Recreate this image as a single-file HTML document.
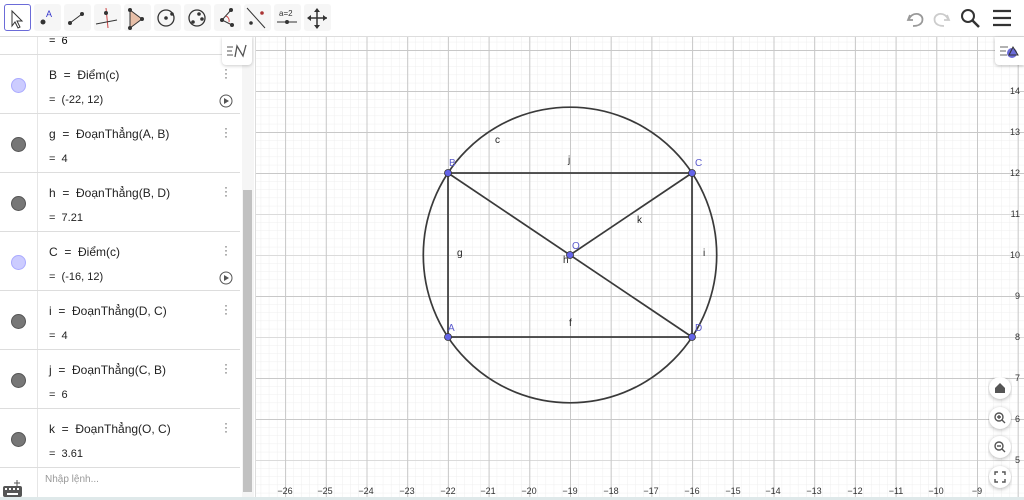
<!DOCTYPE html>
<html><head><meta charset="utf-8"><style>
body{margin:0;width:1024px;height:500px;overflow:hidden;font-family:"Liberation Sans",sans-serif;background:#fff;position:relative}
.tb{position:absolute;left:0;top:0;width:1024px;height:36px;background:#fff;border-bottom:1px solid #ddd}
.tbtn{position:absolute;top:4px;width:27px;height:27px;border-radius:3px;background:#f6f6f6}
.alg{position:absolute;left:0;top:37px;width:255px;height:463px;background:#fff;border-right:1px solid #ddd;overflow:hidden}
.row{position:absolute;left:0;width:240px;height:58px;border-bottom:1px solid #ddd}
.row .c{position:absolute;left:11px;top:23px;width:13px;height:13px;border-radius:50%;background:#777;border:1px solid #555}
.row .c.b{background:#ccccff;border-color:#aaf}
.row .l1{position:absolute;left:49px;top:13px;font-size:12px;color:#222}
.row .l2{position:absolute;left:49px;top:39px;font-size:11px;color:#222}
.row .dots{position:absolute;left:224px;top:12px;width:3px;font-size:12px;color:#555;line-height:4px}
.vl{position:absolute;left:37px;top:0;width:1px;height:463px;background:#e6e6e6}
</style></head><body>
<div class="tb">
<div class="tbtn" style="left:4px;border:1px solid #6b6bd8;width:25px;height:25px;background:#fff"></div>
<div class="tbtn" style="left:34px"></div><div class="tbtn" style="left:64px"></div><div class="tbtn" style="left:94px"></div><div class="tbtn" style="left:124px"></div><div class="tbtn" style="left:154px"></div><div class="tbtn" style="left:184px"></div><div class="tbtn" style="left:214px"></div><div class="tbtn" style="left:244px"></div><div class="tbtn" style="left:274px"></div><div class="tbtn" style="left:304px"></div>
<svg width="1024" height="36" style="position:absolute;left:0;top:0">
<path d="M12 11 L12 26 L15 22 L18 28 L20 27 L17 21 L22 21 Z" fill="#fff" stroke="#333" stroke-width="1"/>
<circle cx="43" cy="22" r="2.5" fill="#333"/><text x="46" y="17" font-size="9" fill="#3333cc">A</text>
<line x1="70" y1="23" x2="82" y2="14" stroke="#333"/><circle cx="70" cy="23" r="2" fill="#333"/><circle cx="82" cy="14" r="2" fill="#333"/>
<line x1="106" y1="8" x2="108" y2="28" stroke="#c44"/><line x1="96" y1="24" x2="117" y2="20" stroke="#333"/><circle cx="106" cy="13" r="2" fill="#333"/>
<path d="M130 10 L130 28 L142 19 Z" fill="#e7bfa8" stroke="#333"/><circle cx="130" cy="10" r="2" fill="#333"/><circle cx="130" cy="28" r="2" fill="#333"/><circle cx="142" cy="19" r="2" fill="#333"/>
<circle cx="166" cy="18" r="8" fill="none" stroke="#333" stroke-width="1.3"/><circle cx="166" cy="18" r="1.8" fill="#333"/><circle cx="172" cy="14" r="1.8" fill="#333"/>
<circle cx="197" cy="18" r="8" fill="none" stroke="#333" stroke-width="1.3"/><circle cx="193" cy="22" r="1.8" fill="#333"/><circle cx="199" cy="14" r="1.8" fill="#333"/><circle cx="202" cy="19" r="1.8" fill="#333"/>
<path d="M231 10 L222 20 L232 25" fill="none" stroke="#333"/><path d="M226 16 a5 5 0 0 1 3 6" fill="none" stroke="#c44"/><circle cx="222" cy="20" r="2" fill="#333"/><circle cx="231" cy="10" r="2" fill="#333"/><circle cx="232" cy="25" r="2" fill="#333"/>
<line x1="247" y1="8" x2="265" y2="28" stroke="#333"/><circle cx="262" cy="13" r="1.8" fill="#a33"/><circle cx="251" cy="23" r="1.8" fill="#333"/>
<text x="279" y="16" font-size="8" fill="#333">a=2</text><line x1="277" y1="22" x2="297" y2="22" stroke="#333"/><circle cx="287" cy="22" r="2" fill="#333"/>
<path d="M317 9 L317 28 M308 18 L327 18" stroke="#333" stroke-width="1.5"/><path d="M314 12 L317 8 L320 12Z M314 25 L317 29 L320 25Z M311 15 L307 18 L311 21Z M323 15 L327 18 L323 21Z" fill="#333"/>
<path d="M910 15 L908 20 L913 20 M909 19 Q912 13 918 14 Q924 16 922 22 Q920 26 913 26" fill="none" stroke="#999" stroke-width="1.8"/>
<path d="M947 15 L949 20 L944 20 M948 19 Q945 13 939 14 Q933 16 935 22 Q937 26 944 26" fill="none" stroke="#ccc" stroke-width="1.8"/>
<circle cx="968" cy="16" r="6" fill="none" stroke="#333" stroke-width="2"/><line x1="972" y1="20" x2="979" y2="27" stroke="#333" stroke-width="2.5"/>
<path d="M993 11 H1011 M993 18 H1011 M993 25 H1011" stroke="#333" stroke-width="2.2"/>
</svg>
</div>
<svg width="769" height="463" style="position:absolute;left:255px;top:37px" viewBox="255 37 769 463">
<defs>
<pattern id="mi" patternUnits="userSpaceOnUse" x="570" y="173" width="8.14" height="8.2"><path d="M0 0V8.2M0 0H8.14" stroke="#eeeeee" stroke-width="1" fill="none"/></pattern>
<pattern id="ma" patternUnits="userSpaceOnUse" x="570" y="173" width="40.7" height="41"><path d="M0.5 0V41M0 0.5H40.7" stroke="#c8c8c8" stroke-width="1" fill="none"/></pattern>
</defs>
<rect x="255" y="37" width="769" height="463" fill="#fff"/>
<rect x="255" y="37" width="769" height="463" fill="url(#mi)"/>
<rect x="255" y="37" width="769" height="463" fill="url(#ma)"/>
<g font-size="9" fill="#333" text-anchor="middle">
<text x="285" y="494">−26</text><text x="325" y="494">−25</text><text x="366" y="494">−24</text><text x="407" y="494">−23</text><text x="448" y="494">−22</text><text x="488" y="494">−21</text><text x="529" y="494">−20</text><text x="570" y="494">−19</text><text x="611" y="494">−18</text><text x="651" y="494">−17</text><text x="692" y="494">−16</text><text x="733" y="494">−15</text><text x="773" y="494">−14</text><text x="814" y="494">−13</text><text x="855" y="494">−12</text><text x="896" y="494">−11</text><text x="936" y="494">−10</text><text x="977" y="494">−9</text>
</g>
<g font-size="9" fill="#333" text-anchor="end">
<text x="1020" y="94">14</text><text x="1020" y="135">13</text><text x="1020" y="176">12</text><text x="1020" y="217">11</text><text x="1020" y="258">10</text><text x="1020" y="299">9</text><text x="1020" y="340">8</text><text x="1020" y="381">7</text><text x="1020" y="422">6</text><text x="1020" y="463">5</text>
</g>
<ellipse cx="570" cy="255" rx="146.7" ry="147.8" fill="none" stroke="#3a3a3a" stroke-width="1.7"/>
<g stroke="#3a3a3a" stroke-width="1.7" fill="none">
<rect x="448" y="173" width="244" height="164"/>
<line x1="448" y1="173" x2="692" y2="337"/><line x1="570" y1="255" x2="692" y2="173"/>
</g>
<g fill="#6464e8" stroke="#333" stroke-width="0.8">
<circle cx="448" cy="173" r="3.5"/><circle cx="692" cy="173" r="3.5"/><circle cx="448" cy="337" r="3.5"/><circle cx="692" cy="337" r="3.5"/><circle cx="570" cy="255" r="3.5"/>
</g>
<g font-size="10" fill="#5a5acc">
<text x="449" y="166">B</text><text x="695" y="166">C</text><text x="448" y="331">A</text><text x="695" y="331">D</text><text x="572" y="249">O</text>
</g>
<g font-size="10" fill="#222">
<text x="495" y="143">c</text><text x="568" y="163">j</text><text x="637" y="223">k</text><text x="457" y="256">g</text><text x="563" y="263">h</text><text x="703" y="256">i</text><text x="569" y="326">f</text>
</g>
</svg>
<div style="position:absolute;left:995px;top:37px;width:29px;height:28px;background:#fff;box-shadow:0 1px 3px rgba(0,0,0,.25);border-radius:0 0 0 4px">
<svg width="29" height="28"><path d="M5 10H13M5 14H11M5 18H12" stroke="#666"/><circle cx="17" cy="16" r="5" fill="#6a6ad8"/><path d="M14 18 L18 10 L23 18Z" fill="none" stroke="#333"/></svg></div>
<div style="position:absolute;left:988px;top:377px;width:24px;height:118px">
<svg width="24" height="118">
<g fill="#fff" style="filter:drop-shadow(0 1px 2px rgba(0,0,0,.3))"><circle cx="12" cy="11" r="11"/><circle cx="12" cy="41" r="11"/><circle cx="12" cy="70" r="11"/><circle cx="12" cy="100" r="11"/></g>
<path d="M7 11 L12 6 L17 11 V16 H7Z" fill="#555"/>
<circle cx="11" cy="40" r="4" fill="none" stroke="#555" stroke-width="1.4"/><path d="M14 43 L17 46M9 40H13M11 38V42" stroke="#555" stroke-width="1.4"/>
<circle cx="11" cy="69" r="4" fill="none" stroke="#555" stroke-width="1.4"/><path d="M14 72 L17 75M9 69H13" stroke="#555" stroke-width="1.4"/>
<path d="M7 98V95H10M14 95H17V98M17 102V105H14M10 105H7V102" fill="none" stroke="#555" stroke-width="1.4"/>
</svg></div>
<div class="alg">
<div class="vl"></div>
<div style="position:absolute;left:0;top:0;width:240px;height:17px;border-bottom:1px solid #ddd"><span style="position:absolute;left:49px;top:-2px;font-size:11px">= &nbsp;6</span></div>
<div class="row" style="top:18px"><div class="c b"></div><div class="l1">B &nbsp;= &nbsp;Điểm(c)</div><div class="l2">= &nbsp;(-22, 12)</div><div class="dots">·<br>·<br>·</div><svg style="position:absolute;left:219px;top:39px" width="14" height="14"><circle cx="7" cy="7" r="6" fill="none" stroke="#555"/><path d="M5 4L10 7L5 10Z" fill="#555"/></svg></div>
<div class="row" style="top:77px"><div class="c"></div><div class="l1">g &nbsp;= &nbsp;ĐoạnThẳng(A, B)</div><div class="l2">= &nbsp;4</div><div class="dots">·<br>·<br>·</div></div>
<div class="row" style="top:136px"><div class="c"></div><div class="l1">h &nbsp;= &nbsp;ĐoạnThẳng(B, D)</div><div class="l2">= &nbsp;7.21</div><div class="dots">·<br>·<br>·</div></div>
<div class="row" style="top:195px"><div class="c b"></div><div class="l1">C &nbsp;= &nbsp;Điểm(c)</div><div class="l2">= &nbsp;(-16, 12)</div><div class="dots">·<br>·<br>·</div><svg style="position:absolute;left:219px;top:39px" width="14" height="14"><circle cx="7" cy="7" r="6" fill="none" stroke="#555"/><path d="M5 4L10 7L5 10Z" fill="#555"/></svg></div>
<div class="row" style="top:254px"><div class="c"></div><div class="l1">i &nbsp;= &nbsp;ĐoạnThẳng(D, C)</div><div class="l2">= &nbsp;4</div><div class="dots">·<br>·<br>·</div></div>
<div class="row" style="top:313px"><div class="c"></div><div class="l1">j &nbsp;= &nbsp;ĐoạnThẳng(C, B)</div><div class="l2">= &nbsp;6</div><div class="dots">·<br>·<br>·</div></div>
<div class="row" style="top:372px"><div class="c"></div><div class="l1">k &nbsp;= &nbsp;ĐoạnThẳng(O, C)</div><div class="l2">= &nbsp;3.61</div><div class="dots">·<br>·<br>·</div></div>
<div style="position:absolute;left:45px;top:437px;font-size:10px;color:#999">Nhập lệnh...</div>
<div style="position:absolute;left:242px;top:0;width:12px;height:463px;background:#f5f5f5"></div>
<div style="position:absolute;left:243px;top:153px;width:9px;height:302px;background:#c1c1c1"></div>
<div style="position:absolute;left:222px;top:0;width:30px;height:28px;background:#fff;box-shadow:0 1px 3px rgba(0,0,0,.2);border-radius:0 0 4px 4px">
<svg width="30" height="28"><path d="M5 10H11M5 14H10M5 18H11" stroke="#555"/><path d="M13 20 L15 9 L21 19 L24 8" fill="none" stroke="#555" stroke-width="1.3"/></svg></div>
<svg style="position:absolute;left:2px;top:443px" width="22" height="18"><rect x="1" y="6" width="19" height="11" rx="2" fill="#555"/><g fill="#fff"><rect x="3" y="8" width="2" height="2"/><rect x="7" y="8" width="2" height="2"/><rect x="11" y="8" width="2" height="2"/><rect x="15" y="8" width="2" height="2"/><rect x="5" y="13" width="11" height="2"/></g><path d="M15 0V6M12 3H18" stroke="#555"/></svg>
</div>
<div style="position:absolute;left:0;top:497px;width:1024px;height:3px;background:#dfe9ea"></div>
</body></html>
